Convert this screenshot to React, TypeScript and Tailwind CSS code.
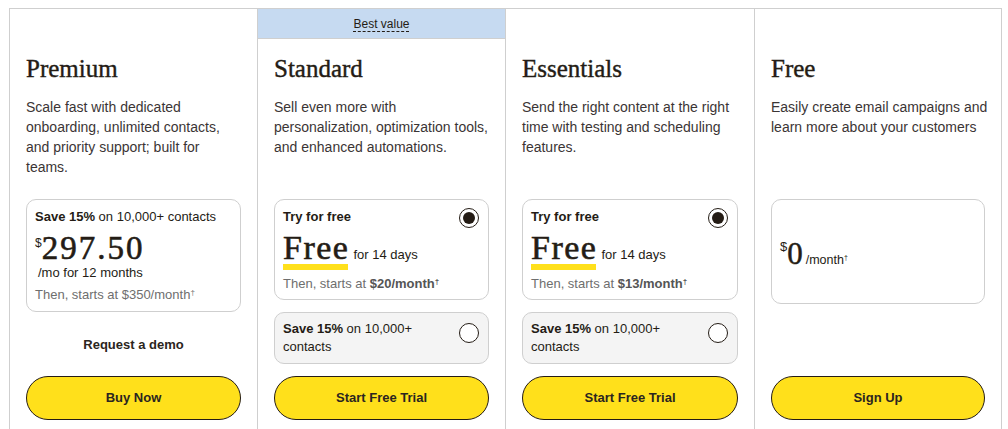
import React from "react";

const serif = { fontFamily: '"Liberation Serif", "Times New Roman", serif' };

function Radio({ checked }: { checked: boolean }) {
  return (
    <div className="w-[20px] h-[20px] rounded-full border-[1.5px] border-[#241c15] bg-white flex items-center justify-center shrink-0">
      {checked && <div className="w-[12px] h-[12px] rounded-full bg-[#241c15]" />}
    </div>
  );
}

function Button({ label }: { label: string }) {
  return (
    <div className="mt-auto h-[44px] w-full rounded-full border border-[#241c15] bg-[#ffe01b] flex items-center justify-center text-[13px] font-bold text-[#2b2520]">
      {label}
    </div>
  );
}

function Header({ title, desc, banner }: { title: string; desc: string; banner?: boolean }) {
  return (
    <>
      {banner ? (
        <div className="h-[30px] bg-[#c6daf1] border-b border-[#cfcfcf] flex items-center justify-center">
          <span className="text-[12px] text-[#241c15] underline decoration-dashed underline-offset-[3px] decoration-1">Best value</span>
        </div>
      ) : (
        <div className="h-[30px]" />
      )}
      <div className="px-[16px]">
        <div style={serif} className="pt-[14px] text-[25px] leading-[32px] text-[#241c15] [-webkit-text-stroke:0.4px_#241c15]">
          {title}
        </div>
        <div className="mt-[12px] h-[102px] w-[217px] text-[14px] leading-[20px] text-[#3b3535]">{desc}</div>
      </div>
    </>
  );
}

function TrialBox({ price }: { price: string }) {
  return (
    <>
      <div className="h-[101px] rounded-[10px] border border-[#cfcfcf] bg-white px-[8px] pt-[7px] relative">
        <div className="absolute right-[9px] top-[8px]">
          <Radio checked />
        </div>
        <div className="text-[13px] leading-[20px] font-bold text-[#241c15]">Try for free</div>
        <div style={serif} className="mt-[5px] h-[32px] text-[34px] leading-[32px] whitespace-nowrap text-[#241c15]">
          <span className="tracking-[1.5px] [-webkit-text-stroke:0.6px_#241c15]">Free</span>
          <span className="ml-[4px] text-[13px] text-[#241c15]" style={{ fontFamily: '"Liberation Sans", Arial, sans-serif' }}>
            for 14 days
          </span>
        </div>
        <div className="h-[6px] w-[65px] bg-[#ffe01b]" />
        <div className="mt-[5px] text-[13px] leading-[18px] text-[#6e6e6e]">
          Then, starts at <span className="font-bold text-[#555]">{price}</span>
          <sup className="text-[8px] font-bold text-[#555]">†</sup>
        </div>
      </div>
      <div className="mt-[12px] h-[52px] rounded-[10px] border border-[#cfcfcf] bg-[#f4f4f4] px-[8px] pt-[7px] relative">
        <div className="absolute right-[9px] top-[10px]">
          <Radio checked={false} />
        </div>
        <div className="w-[170px] text-[13px] leading-[18px] text-[#241c15]">
          <b>Save 15%</b> on 10,000+ contacts
        </div>
      </div>
    </>
  );
}

export default function App() {
  return (
    <div className="w-[1008px] h-[429px] bg-white overflow-hidden pl-[9px] pt-[8px]" style={{ fontFamily: '"Liberation Sans", Arial, sans-serif' }}>
      <div className="flex h-[440px]">
        {/* Premium */}
        <div className="w-[248px] border-l border-t border-[#cfcfcf] flex flex-col">
          <Header
            title="Premium"
            desc="Scale fast with dedicated onboarding, unlimited contacts, and priority support; built for teams."
          />
          <div className="px-[16px] flex flex-col h-[221px]">
            <div className="h-[113px] rounded-[10px] border border-[#cfcfcf] px-[8px] pt-[7px]">
              <div className="text-[13px] leading-[20px] text-[#241c15]">
                <b>Save 15%</b> on 10,000+ contacts
              </div>
              <div className="mt-[5px] flex items-start h-[32px] text-[#241c15]">
                <span className="text-[12px] leading-[12px] mt-[5px]">$</span>
                <span style={serif} className="text-[33px] leading-[32px] tracking-[2px] [-webkit-text-stroke:0.6px_#241c15]">
                  297.50
                </span>
              </div>
              <div className="ml-[3px] text-[13px] leading-[18px] text-[#241c15]">/mo for 12 months</div>
              <div className="mt-[3px] text-[13px] leading-[20px] text-[#6e6e6e]">
                Then, starts at $350/month<sup className="text-[8px]">†</sup>
              </div>
            </div>
            <div className="mt-[23px] text-center text-[13px] leading-[20px] font-bold text-[#2b2520]">Request a demo</div>
            <Button label="Buy Now" />
          </div>
        </div>

        {/* Standard */}
        <div className="w-[248px] border-l border-t border-[#cfcfcf] flex flex-col">
          <Header
            banner
            title="Standard"
            desc="Sell even more with personalization, optimization tools, and enhanced automations."
          />
          <div className="px-[16px] flex flex-col h-[221px]">
            <TrialBox price="$20/month" />
            <Button label="Start Free Trial" />
          </div>
        </div>

        {/* Essentials */}
        <div className="w-[249px] border-l border-t border-[#cfcfcf] flex flex-col">
          <Header
            title="Essentials"
            desc="Send the right content at the right time with testing and scheduling features."
          />
          <div className="px-[16px] flex flex-col h-[221px]">
            <TrialBox price="$13/month" />
            <Button label="Start Free Trial" />
          </div>
        </div>

        {/* Free */}
        <div className="w-[248px] border-l border-r border-t border-[#cfcfcf] flex flex-col">
          <Header title="Free" desc="Easily create email campaigns and learn more about your customers" />
          <div className="px-[16px] flex flex-col h-[221px]">
            <div className="h-[105px] rounded-[10px] border border-[#cfcfcf] px-[8px] flex items-center">
              <div className="flex items-start text-[#241c15] mt-[4px]">
                <span className="text-[13px] leading-[13px]">$</span>
                <span style={serif} className="text-[31px] leading-[28px] [-webkit-text-stroke:0.5px_#241c15]">0</span>
                <span className="ml-[3px] mt-[13px] text-[12.5px] leading-[14px]">
                  /month<sup className="text-[7px]">†</sup>
                </span>
              </div>
            </div>
            <Button label="Sign Up" />
          </div>
        </div>
      </div>
    </div>
  );
}
